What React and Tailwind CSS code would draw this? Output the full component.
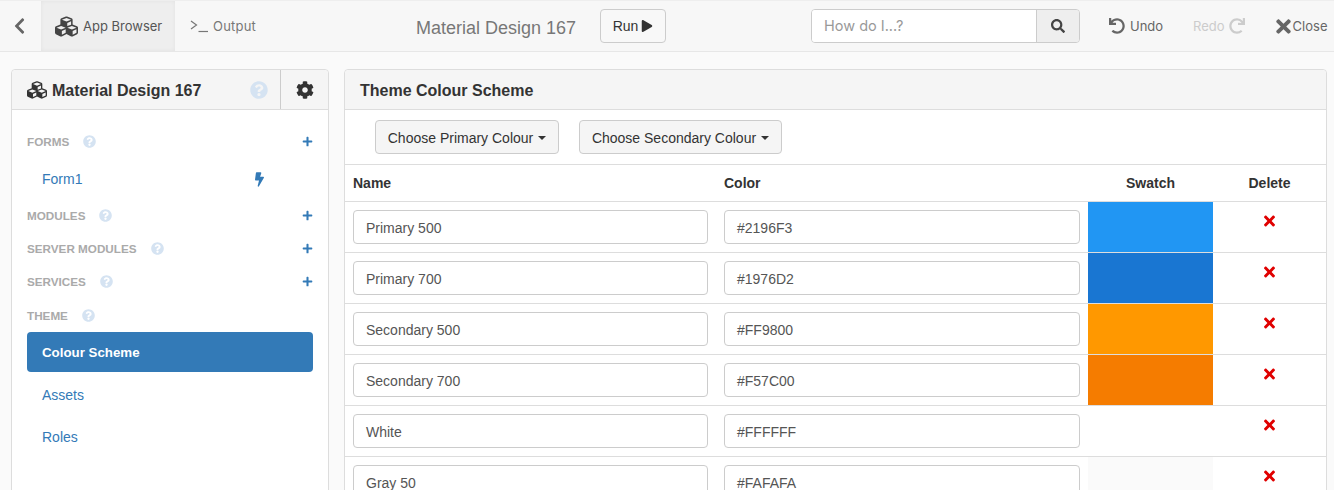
import React from "react";
import { FaCubes, FaSearch, FaUndo, FaRedo, FaTimes, FaCog, FaQuestionCircle, FaPlus, FaBolt, FaChevronLeft, FaPlay } from "react-icons/fa";

const rows = [
  ["Primary 500", "#2196F3"],
  ["Primary 700", "#1976D2"],
  ["Secondary 500", "#FF9800"],
  ["Secondary 700", "#F57C00"],
  ["White", "#FFFFFF"],
  ["Gray 50", "#FAFAFA"],
];

function SectionHead({ label, add, tall }) {
  return (
    <div className={`${tall ? "h-[34px] pt-px" : "h-[33px]"} flex items-center pl-[15px] pr-[15px] shrink-0`}>
      <span className="text-[11.7px] font-bold text-[#aaaaaa]">{label}</span>
      <FaQuestionCircle className="ml-[14px] text-[#d5e3f2] w-[13px] h-[13px]" />
      {add && <FaPlus className="ml-auto text-[#337ab7] w-[11px] h-[11px] -mt-px" />}
    </div>
  );
}

function Caret() {
  return <span className="inline-block ml-[5px] w-0 h-0 border-x-4 border-t-4 border-x-transparent border-t-[#333333]" />;
}

function DropButton({ children, width }) {
  return (
    <button className={`${width} h-[34px] flex items-center justify-center pt-[2px] bg-[#f5f5f5] border border-[#cccccc] rounded-[4px] text-[14px] text-[#333333]`}>
      {children}
      <Caret />
    </button>
  );
}

function Field({ value }) {
  return (
    <div className="h-[34px] flex items-center pt-[2px] px-[12px] bg-white border border-[#cccccc] rounded-[4px] text-[14px] text-[#555555]">
      {value}
    </div>
  );
}

export default function App() {
  return (
    <div className="h-[490px] overflow-hidden bg-[#fafafa] font-['Liberation_Sans',sans-serif] text-[#333333]">
      <header className="h-[52px] flex items-center bg-[#f7f7f7] border-t border-t-[#eeeeee] border-b border-b-[#e7e7e7] font-['Inter',sans-serif]">
        <div className="w-[41px] flex justify-center -ml-px">
          <FaChevronLeft className="w-[15px] h-[18px] text-[#666666]" />
        </div>
        <div className="ml-px w-[134px] h-full flex items-center pl-[14px] bg-[#eeeeee] text-[#555555] shadow-[inset_0_0_4px_rgba(0,0,0,0.05)]">
          <FaCubes className="w-[23px] h-[23px] text-[#444444]" />
          <span className="ml-[5px] pt-px text-[13px]">App Browser</span>
        </div>
        <div className="flex items-center ml-[15px] text-[#777777]">
          <svg width="19" height="14" viewBox="0 0 19 14" fill="none" stroke="#777777" strokeWidth="1.2">
            <path d="M1 2 L6.5 6 L1 10" />
            <path d="M8.5 12.5 H18" />
          </svg>
          <span className="ml-[4px] pt-px text-[13px] tracking-[0.2px]">Output</span>
        </div>
        <div className="ml-[160px] pt-[5px] text-[18px] text-[#777777] font-['Liberation_Sans',sans-serif] whitespace-nowrap w-[184px]">
          Material Design 167
        </div>
        <button className="h-[34px] w-[66px] flex items-center justify-center gap-[3px] border border-[#cccccc] rounded-[4px] bg-[#f8f8f8] text-[14px] text-[#333333] font-['Liberation_Sans',sans-serif]">
          Run
          <FaPlay className="w-[12px] h-[12px]" />
        </button>
        <div className="ml-[145px] w-[269px] h-[34px] flex border border-[#cccccc] rounded-[4px] overflow-hidden">
          <div className="flex-1 bg-white flex items-center pl-[12px] text-[14.5px] text-[#999999]">How do I...?</div>
          <div className="w-[43px] bg-[#eeeeee] border-l border-[#cccccc] flex items-center justify-center">
            <FaSearch className="w-[14px] h-[14px] text-[#444444]" />
          </div>
        </div>
        <div className="ml-[29px] flex items-center text-[13px] text-[#666666]">
          <FaUndo className="w-[16px] h-[16px]" />
          <span className="ml-[5px] pt-px">Undo</span>
        </div>
        <div className="ml-[30px] flex items-center text-[13px] text-[#cccccc]">
          <span className="pt-px">Redo</span>
          <FaRedo className="ml-[4px] w-[16px] h-[16px]" />
        </div>
        <div className="ml-[31px] flex items-center text-[13px] text-[#666666]">
          <FaTimes className="w-[15px] h-[21px]" />
          <span className="ml-[2px] pt-px">Close</span>
        </div>
      </header>

      <div className="flex pt-[17px] pl-[11px] pr-[7px] gap-[15px]">
        <aside className="w-[318px] h-[500px] shrink-0 bg-white border border-[#dddddd] rounded-t-[4px] flex flex-col">
          <div className="h-[40px] flex bg-[#f5f5f5] border-b border-[#dddddd] rounded-t-[4px] shrink-0">
            <div className="flex-1 flex items-center pl-[15px]">
              <FaCubes className="w-[20px] h-[20px] text-[#333333]" />
              <span className="ml-[5px] pt-[2px] text-[16px] font-bold">Material Design 167</span>
              <FaQuestionCircle className="ml-auto mr-[12px] w-[18px] h-[18px] text-[#d5e3f2]" />
            </div>
            <div className="w-[48px] border-l border-[#cccccc] flex items-center justify-center">
              <FaCog className="w-[18px] h-[18px] text-[#333333]" />
            </div>
          </div>
          <div className="pt-[15px] flex flex-col">
            <SectionHead label="FORMS" add />
            <div className="h-[41px] flex items-center pl-[30px] pr-[64px] pt-[2px] text-[14px] text-[#337ab7] shrink-0 justify-between">
              <span>Form1</span>
              <FaBolt className="w-[9px] h-[15px]" />
            </div>
            <SectionHead label="MODULES" add />
            <SectionHead label="SERVER MODULES" add />
            <SectionHead label="SERVICES" add />
            <SectionHead label="THEME" tall />
            <div className="mx-[15px] h-[40px] flex items-center pl-[15px] pt-[2px] bg-[#337ab7] rounded-[4px] text-[13.3px] font-bold text-white shrink-0">
              Colour Scheme
            </div>
            <div className="mt-[2px] h-[42px] flex items-center pl-[30px] text-[14px] text-[#337ab7]">Assets</div>
            <div className="h-[42px] flex items-center pl-[30px] text-[14px] text-[#337ab7]">Roles</div>
          </div>
        </aside>

        <main className="flex-1 h-[500px] bg-white border border-[#dddddd] rounded-t-[4px]">
          <div className="h-[40px] flex items-center pl-[15px] pt-[2px] bg-[#f5f5f5] border-b border-[#dddddd] rounded-t-[4px] text-[16px] font-bold">
            Theme Colour Scheme
          </div>
          <div className="h-[55px] flex items-center pl-[30px] gap-[20px] border-b border-[#dddddd]">
            <DropButton width="w-[184px]">Choose Primary Colour</DropButton>
            <DropButton width="w-[203px]">Choose Secondary Colour</DropButton>
          </div>
          <div className="grid grid-cols-[371px_372px_125px_113px] h-[36px] items-center text-[14px] font-bold">
            <div className="pl-[8px]">Name</div>
            <div className="pl-[8px]">Color</div>
            <div className="text-center">Swatch</div>
            <div className="text-center">Delete</div>
          </div>
          {rows.map(([name, color]) => (
            <div key={name} className="grid grid-cols-[371px_372px_125px_113px] h-[51px] border-t border-[#dddddd]">
              <div className="px-[8px] pt-[8px]"><Field value={name} /></div>
              <div className="px-[8px] pt-[8px]"><Field value={color} /></div>
              <div style={{ backgroundColor: color }} />
              <div className="flex justify-center pt-[11px]">
                <FaTimes className="w-[11px] h-[16px] text-[#e00000]" />
              </div>
            </div>
          ))}
        </main>
      </div>
    </div>
  );
}
